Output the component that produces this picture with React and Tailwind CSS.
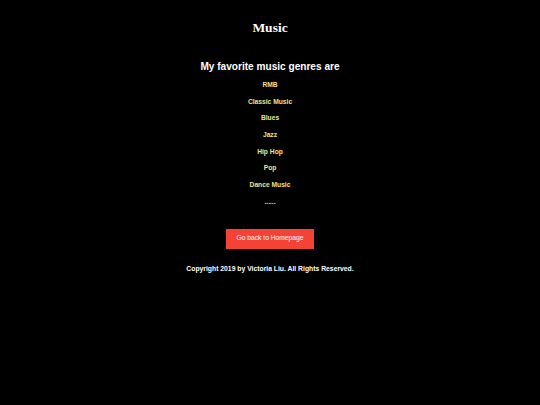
const GENRES = ['RMB', 'Classic Music', 'Blues', 'Jazz', 'Hip Hop', 'Pop', 'Dance Music', '......']

export default function App() {
  return (
    <div className="min-h-[405px] bg-black text-white text-center font-['Liberation_Sans',Arial,sans-serif]">
      <h1 className="pt-[18px] font-['Liberation_Serif',serif] font-bold text-[13.5px] leading-[20px]">Music</h1>

      <h2 className="mt-[21px] font-bold text-[10.1px] leading-[16px]">My favorite music genres are</h2>

      <ul className="mt-[2px] text-[#f0e68c] font-bold text-[6.7px]">
        {GENRES.map((g) => (
          <li key={g} className="h-[16.7px] leading-[16.7px]">{g}</li>
        ))}
      </ul>

      <div className="mt-[18px] flex justify-center">
        <button className="bg-[#f44336] text-white text-[6.7px] w-[88px] h-[20px]">Go back to Homepage</button>
      </div>

      <p className="mt-[15px] font-bold text-[6.8px]">Copyright 2019 by Victoria Liu. All Rights Reserved.</p>
    </div>
  )
}
